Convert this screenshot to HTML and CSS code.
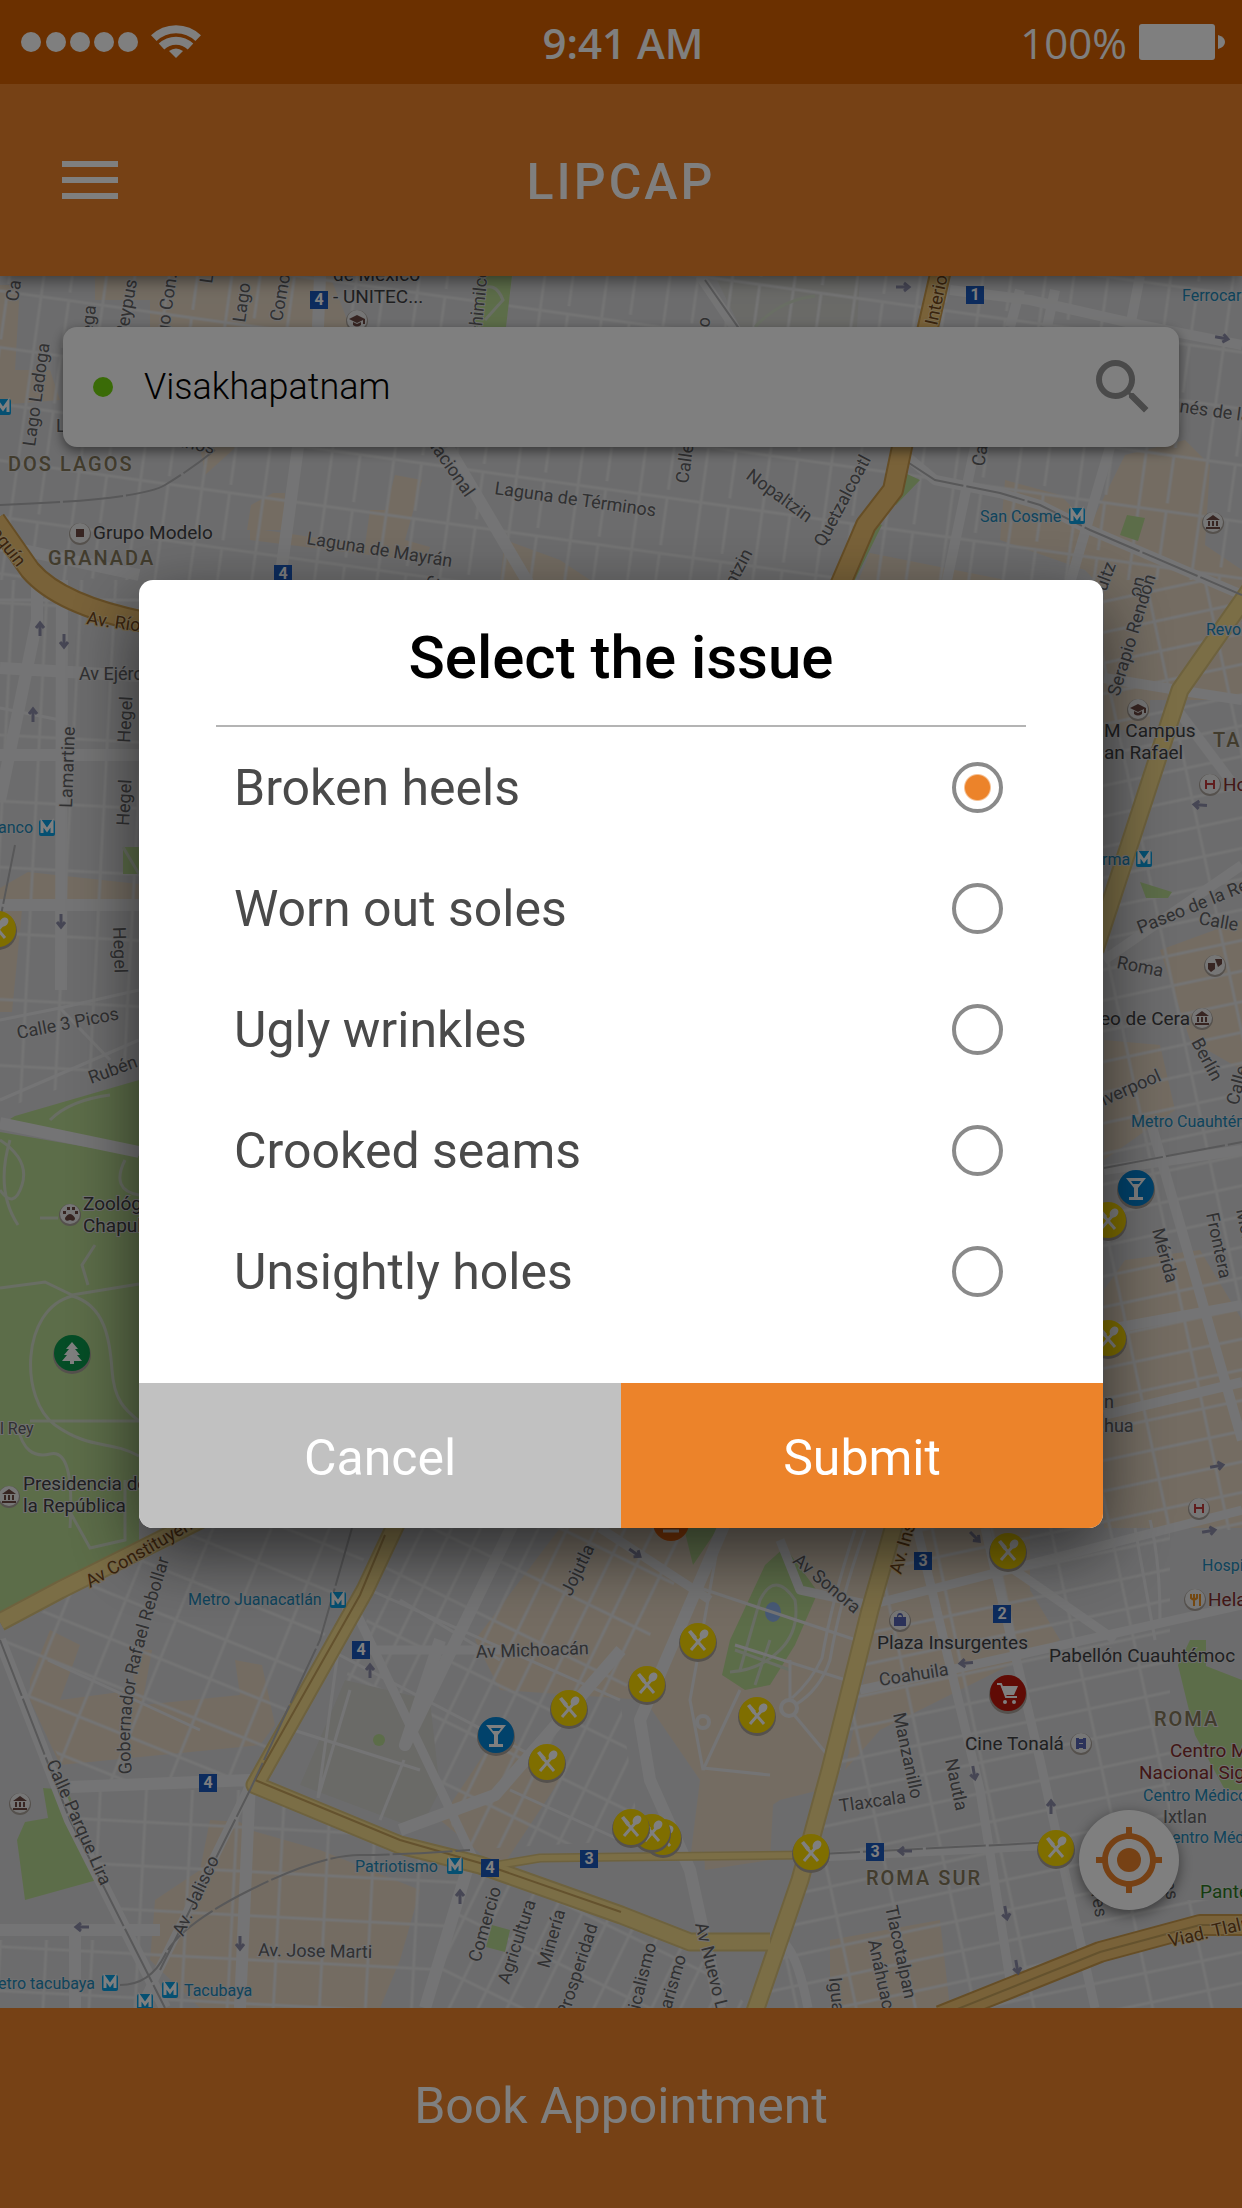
FILE: index.html
```html
<!DOCTYPE html>
<html lang="en">
<head>
<meta charset="utf-8">
<meta name="viewport" content="width=device-width, initial-scale=1">
<title>LIPCAP</title>
<link rel="stylesheet" href="styles.css">
</head>
<body class="screen">
<div class="status">
  <div class="status__side">
    <svg class="status__signal" viewBox="0 0 118 20" aria-hidden="true"><circle cx="10" cy="10" r="10"/><circle cx="35" cy="10" r="10"/><circle cx="59" cy="10" r="10"/><circle cx="83" cy="10" r="10"/><circle cx="107" cy="10" r="10"/></svg>
    <svg class="status__wifi" viewBox="0 0 50 34" aria-hidden="true"><path d="M25 33l-7-7q7-5 14 0z"/><path d="M10.500 21.500a21 21 0 0 1 29 0M2.800 13.200a32 32 0 0 1 44.400 0" fill="none" stroke="#fff" stroke-width="8"/></svg>
  </div>
  <span class="status__time">9:41 AM</span>
  <div class="status__side status__side--end">
    <span class="status__charge">100%</span>
    <svg class="status__battery" viewBox="0 0 86 36" aria-hidden="true"><rect width="76" height="36" rx="3"/><path d="M79 11q7 2 7 7t-7 7z"/></svg>
  </div>
</div>
<header class="topbar">
  <button class="topbar__menu" type="button" aria-label="Menu"><span></span><span></span><span></span></button>
  <h1 class="topbar__title">LIPCAP</h1>
</header>
<main class="place">
  <svg class="map" viewBox="0 276 1242 1732" preserveAspectRatio="xMidYMid slice" role="img" aria-label="Street map">
    <defs>
      <pattern id="g-north" width="62" height="56" patternUnits="userSpaceOnUse" patternTransform="rotate(8)"><path class="lane" d="M0 8H62M20 0V56M48 8V56"/></pattern>
      <pattern id="g-west" width="34" height="66" patternUnits="userSpaceOnUse" patternTransform="rotate(3)"><path class="lane" d="M0 8H34M10 0V66"/></pattern>
      <pattern id="g-juarez" width="54" height="42" patternUnits="userSpaceOnUse" patternTransform="rotate(22)"><path class="lane" d="M0 8H54M14 0V42"/></pattern>
      <pattern id="g-roma" width="58" height="30" patternUnits="userSpaceOnUse" patternTransform="rotate(-12)"><path class="lane" d="M0 8H58M14 0V30"/></pattern>
      <pattern id="g-condesa" width="26" height="56" patternUnits="userSpaceOnUse" patternTransform="rotate(26)"><path class="lane" d="M0 8H26M10 0V56"/></pattern>
      <pattern id="g-south" width="46" height="44" patternUnits="userSpaceOnUse" patternTransform="rotate(3)"><path class="lane" d="M0 8H46M10 0V44"/></pattern>
      <symbol id="food" viewBox="-20 -20 40 40" overflow="visible"><circle class="pin-shadow" cy="2" r="19"/><circle fill="#ffdc00" r="18"/><path d="M-7 9L6-6M7 9L-5-5" stroke="#fff" stroke-width="3" fill="none"/><ellipse cx="6" cy="-7" rx="4" ry="5" fill="#fff" transform="rotate(40 6 -7)"/><path d="M-10-9l3-2 6 7-3 3z" fill="#fff"/></symbol>
      <symbol id="bar" viewBox="-20 -20 40 40" overflow="visible"><circle class="pin-shadow" cy="2" r="19"/><circle fill="#0284d6" r="18"/><path d="M-10-10H10L2 0V9H7V12H-7V9H-2V0zM-5-7l2 3h6l2-3z" fill="#fff" fill-rule="evenodd"/></symbol>
      <symbol id="metro" viewBox="-9 -9 18 18" overflow="visible"><rect x="-8" y="-8" width="16" height="16" rx="2" fill="#0aa0e4"/><path d="M-5 5V-5L0 2L5-5V5" fill="none" stroke="#fff" stroke-width="3"/></symbol>
      <symbol id="dot" viewBox="-12 -12 24 24" overflow="visible"><circle class="pin-shadow" cy="1" r="11"/><circle class="pin-face" r="10"/></symbol>
      <symbol id="museum" viewBox="-12 -12 24 24" overflow="visible"><circle class="pin-shadow" cy="1" r="11"/><circle class="pin-face" r="10"/><path d="M-7-2L0-7L7-2zM-5-1V4H-3V-1M-1-1V4H1V-1M3-1V4H5V-1M-7 5H7V7H-7z" fill="#6e4a44"/></symbol>
      <symbol id="school" viewBox="-12 -12 24 24" overflow="visible"><circle class="pin-shadow" cy="1" r="11"/><circle class="pin-face" r="10"/><path d="M-8-1L0-5L8-1V4H6V0L0 3zM-4 2V5Q0 8 4 5V2L0 4z" fill="#6e4a44"/></symbol>
      <symbol id="arrow" viewBox="-8 -8 16 16" overflow="visible"><path d="M0 7V-6M-4-1L0-6L4-1" fill="none" stroke="#8c8ca8" stroke-width="3"/></symbol>
    </defs>
    <rect class="land" y="276" width="1242" height="1732"/>
    <g class="block">
      <path d="M0 285H20L15 370H50L60 400L0 405zM95 276H330L350 327H150V300H95zM200 447H236L205 475zM273 493H285L283 530H247L251 505zM395 475L422 480L405 540L430 547L425 562L250 540V528L365 545L370 510H385zM505 540L560 560L590 580H500z"/>
      <path d="M1125 455L1185 440L1210 465L1205 545L1242 570V700H1104V590L1085 570L1000 540L1005 480L1060 495L1090 525zM870 553L1030 585V600H850z"/>
      <path d="M0 888L28 872L139 884V910H22L12 1012H0zM1104 640H1150V730H1104zM1160 950L1242 920V1070L1190 1040zM1104 1040L1160 1045L1175 1110L1104 1160zM1125 1260L1200 1250L1242 1320V1528H1104V1290z"/>
      <path d="M50 1630L80 1645L60 1700L135 1690L130 1650H152L142 1705L240 1695L235 1660L262 1665L275 1725L260 1745L60 1765L30 1700V1680zM210 1820L240 1822L250 1830L320 1850L420 1890L400 1960L380 2008H200L150 1960L155 1900L200 1870zM560 1528H890L850 1690L820 1790L780 1800L690 1860L700 1780L645 1700L500 1690L475 1640zM440 1820L500 1730L560 1780L500 1870z"/>
      <path d="M890 1528H1030V1590L1060 1640L940 1700L880 1730L845 1770L880 1600zM700 1780L775 1770L770 1860L705 1870zM830 1940L940 1920L950 2008H830z"/>
    </g>
    <path class="plaza" d="M715 276H860L857 327H740zM345 1680L430 1700L440 1790L420 1830L300 1785z"/>
    <g>
      <path fill="url(#g-north)" d="M0 276H1242V580H0z"/>
      <path fill="url(#g-west)" d="M0 580H139V1060L0 1110z"/>
      <path fill="url(#g-roma)" d="M1100 580H1242V1530H1100zM890 1520H1170V1900L1242 1900V2008H760L870 1600z"/>
      <path fill="url(#g-juarez)" d="M60 1600L200 1528H380L250 1780L70 1780L0 1640z"/>
      <path fill="url(#g-condesa)" d="M400 1528H700L620 1700L640 1840L460 1850L440 1790L430 1700L345 1680zM470 1870L690 1950L750 2008H430z"/>
      <path fill="url(#g-south)" d="M60 1790H250L460 1870L430 2008H0V1940H130z"/>
    </g>
    <g class="park">
      <path d="M478 276H512L506 327H474zM905 473L920 480L896 505L890 498zM875 522L882 525L855 580H850zM1127 515L1145 518L1138 541L1120 535zM123 847H139V874H123z"/>
      <path d="M15 1116L139 1080V1151L0 1125zM0 1132L139 1156V1400V1545L0 1615zM1140 882L1172 892L1168 898H1146z"/>
      <path d="M684 1528H718L693 1565zM785 1547L818 1592L795 1645L770 1685L745 1690L722 1675L730 1640L765 1565zM1190 1640H1206V1666L1242 1680V1790H1225L1195 1735L1178 1665zM43 1788L68 1790L97 1880L25 1900L17 1840L25 1822L48 1818zM492 1925L510 1930L505 1952L486 1947z"/>
      <circle cx="379" cy="1740" r="6"/>
    </g>
    <ellipse cx="773" cy="1612" rx="8" ry="10" fill="#90b4ec"/>
    <g class="trail">
      <path d="M0 1288L45 1282L72 1295L139 1284M72 1296C20 1310 20 1400 55 1425S110 1440 139 1456M72 1296C105 1305 110 1340 112 1370S125 1410 139 1421H30M18 1428Q25 1460 50 1454T70 1528M0 1140Q30 1160 22 1185T0 1190M10 1140Q-5 1190 18 1225M125 1160Q110 1190 139 1195M95 1245L82 1265L88 1285M40 1218H58M50 1120Q70 1100 110 1095M65 1503L90 1548L125 1540V1480"/>
      <path d="M740 1670L760 1600Q775 1570 795 1600Q800 1630 780 1650T730 1672M735 1650L790 1670M770 1640L755 1685M123 847L139 874M480 290Q495 280 503 300L485 320"/>
      <path d="M755 327Q780 300 815 296"/>
    </g>
    <g class="road">
      <path stroke-width="12" d="M0 668L139 676M0 1123L139 1152M37 580V620L0 800M62 580L61 990M0 755H139M0 905H139M298 447L280 580M448 447L550 620M320 276L318 327M0 545L139 575"/>
      <path stroke-width="10" d="M950 290L1030 300L1140 325L1242 345M1020 290L1010 327M1055 290L1047 327M1140 276L1130 327M905 455L935 480L1000 493L1040 505L1090 530L1242 595M975 447L945 590M1110 447L1068 590M700 276L750 350M1104 678L1190 692L1242 700M1170 700L1230 780M1104 960L1242 865M1104 1170L1242 1150M1104 1330L1242 1305M1104 1415L1242 1382M1150 1120L1242 1440"/>
      <path stroke-width="12" d="M0 1640L70 1820L165 2008M70 1787L250 1780L240 2008M515 1520L405 1745L440 1640M621 1650L495 1795L400 1830M470 1860L425 2008M0 1930H160M75 1930V2008M735 1500L640 1720L650 1780L690 1870L720 2008"/>
      <path stroke-width="9" d="M355 1610L455 1820L475 1862M250 1785L140 2008M600 1528L710 1600M370 1650L500 1650M780 1540L800 1590L870 1605L1242 1510M915 1520L980 1790L1010 1980M985 1528L1040 1760L1095 2008M860 1690L1242 1605M800 1858L1056 1845M775 1938Q795 1940 808 2008M1000 1560L1115 1640"/>
      <path stroke-width="3" d="M721 1528L690 1700L703 1770M703 1768L770 1775M790 1710L840 1770M740 1690L703 1770M790 1660L790 1700M865 1530Q840 1600 830 1660Q820 1690 795 1705M855 1530Q832 1600 822 1658Q812 1680 792 1698M700 1588L862 1642M735 1645L852 1682M0 600H139M48 1660L200 1730M370 1590L620 1700M330 1650L560 1770M400 1600L500 1660M1104 528M1150 1520Q1160 1560 1160 1620M1135 1528L1155 1640M510 1790L620 1840M0 708L60 720M0 1020L60 1008L139 990M0 1100L139 1040M60 1008L110 1060M345 1600L318 1798M350 1690L318 1798M404 1760L380 1820M290 1729L420 1770"/>
    </g>
    <circle class="ring" cx="789" cy="1708" r="8"/>
    <circle class="ring" cx="703" cy="1722" r="6"/>
    <g class="avenue avenue--casing">
      <path stroke-width="19" d="M1250 590L1180 690L1095 950M0 1622L60 1590L210 1515M398 1520L365 1590L255 1785L400 1845L480 1865L621 1915L690 1942H770M897 1515L870 1610L830 1770L800 1880L752 2020"/>
      <path stroke-width="9" d="M480 1868L540 1858L621 1857L805 1855"/>
    </g>
    <g class="avenue">
      <path stroke-width="15" d="M1250 590L1180 690L1095 950M0 1622L60 1590L210 1515M398 1520L365 1590L255 1785L400 1845L480 1865L621 1915L690 1942H770M897 1515L870 1610L830 1770L800 1880L752 2020"/>
      <path stroke-width="6" d="M480 1868L540 1858L621 1857L805 1855"/>
    </g>
    <path class="median" d="M385 1535L360 1595L255 1780L400 1840L480 1863L621 1912"/>
    <path class="rail" d="M909 463L935 480L1000 493L1040 505L1090 530L1242 595M705 280L740 330M15 845L0 920M352 1528L320 1640L250 1790L160 1970M0 1640L70 1820L165 2008M120 1985Q150 1985 165 1955T250 1890T360 1855T470 1850M1104 1168L1242 1142M800 1855L1056 1842M0 505Q140 500 165 485T215 450"/>
    <g class="highway highway--casing"><path d="M941 270L925 340L902 447L893 490L866 525L838 590M-5 520L30 570Q60 605 145 622M940 2016L1100 1952L1200 1925H1250"/></g>
    <g class="highway"><path d="M941 270L925 340L902 447L893 490L866 525L838 590M-5 520L30 570Q60 605 145 622M940 2016L1100 1952L1200 1925H1250"/></g>
    <path class="median" d="M940 2016L1100 1952L1200 1925H1250"/>

    <g class="street">
      <text transform="translate(18 302) rotate(-82)">Ca</text>
      <text transform="translate(92 345) rotate(-84)">nega</text>
      <text transform="translate(127 338) rotate(-80)">Peypus</text>
      <text transform="translate(167 345) rotate(-82)">ago Con.</text>
      <text transform="translate(212 284) rotate(-82)">Lago</text>
      <text transform="translate(245 323) rotate(-82)">Lago</text>
      <text transform="translate(282 322) rotate(-80)">Como</text>
      <text transform="translate(480 346) rotate(-84)">ochimilco</text>
      <text transform="translate(35 447) rotate(-82)">Lago Ladoga</text>
      <text transform="translate(56 432)">L</text>
      <text transform="translate(176 446) rotate(12)">linos</text>
      <text transform="translate(425 440) rotate(55)">Nacional</text>
      <text transform="translate(494 494) rotate(8)">Laguna de Términos</text>
      <text transform="translate(306 544) rotate(9)">Laguna de Mayrán</text>
      <text transform="translate(436 590) rotate(-60)">C</text>
      <text transform="translate(730 596) rotate(-62)">entzin</text>
      <text transform="translate(745 478) rotate(36)">Nopaltzin</text>
      <text transform="translate(824 548) rotate(-62)">Quetzalcoatl</text>
      <text transform="translate(688 484) rotate(-82)">Calle</text>
      <text transform="translate(709 328) rotate(-82)">o</text>
      <text transform="translate(1179 412) rotate(8)">nés de la</text>
      <text transform="translate(984 467) rotate(-80)">Ca</text>
      <text transform="translate(1106 592) rotate(-70)">ultz</text>
      <text transform="translate(1140 598) rotate(-75)">on</text>
      <text transform="translate(79 680)">Av Ejército</text>
      <text transform="translate(130 743) rotate(-87)">Hegel</text>
      <text transform="translate(129 826) rotate(-87)">Hegel</text>
      <text transform="translate(113 927) rotate(88)">Hegel</text>
      <text transform="translate(72 808) rotate(-88)">Lamartine</text>
      <text transform="translate(18 1039) rotate(-11)">Calle 3 Picos</text>
      <text transform="translate(91 1084) rotate(-20)">Rubén</text>
      <text transform="translate(0 1434)" class="small">l Rey</text>
      <text transform="translate(1119 697) rotate(-73)">Serapio Rendon</text>
      <text transform="translate(1140 934) rotate(-22)">Paseo de la Reforma</text>
      <text transform="translate(1198 924) rotate(10)">Calle</text>
      <text transform="translate(1116 968) rotate(11)">Roma</text>
      <text transform="translate(1191 1042) rotate(62)">Berlín</text>
      <text transform="translate(1104 1106) rotate(-24)">iverpool</text>
      <text transform="translate(1238 1106) rotate(-75)">Calle</text>
      <text transform="translate(1152 1230) rotate(75)">Mérida</text>
      <text transform="translate(1206 1214) rotate(78)">Frontera</text>
      <text transform="translate(1236 1210) rotate(78)">Mor</text>
      <text transform="translate(1104 1408)">n</text>
      <text transform="translate(1104 1432)">hua</text>
      <text transform="translate(476 1658) rotate(-2)">Av Michoacán</text>
      <text transform="translate(571 1597) rotate(-64)">Jojutla</text>
      <text transform="translate(46 1763) rotate(66)">Calle Parque Lira</text>
      <text transform="translate(183 1937) rotate(-65)">Av. Jalisco</text>
      <text transform="translate(480 1963) rotate(-74)">Comercio</text>
      <text transform="translate(509 1985) rotate(-72)">Agricultura</text>
      <text transform="translate(549 1969) rotate(-74)">Minería</text>
      <text transform="translate(568 2018) rotate(-72)">Prosperidad</text>
      <text transform="translate(258 1956) rotate(1)">Av. Jose Marti</text>
      <text transform="translate(880 1686) rotate(-9)">Coahuila</text>
      <text transform="translate(840 1812) rotate(-8)">Tlaxcala</text>
      <text transform="translate(893 1714) rotate(78)">Manzanillo</text>
      <text transform="translate(945 1760) rotate(78)">Nautla</text>
      <text transform="translate(885 1907) rotate(78)">Tlacotalpan</text>
      <text transform="translate(868 1941) rotate(78)">Anáhuac</text>
      <text transform="translate(829 1978) rotate(84)">Igua</text>
      <text transform="translate(695 1924) rotate(76)">Av Nuevo León</text>
      <text transform="translate(640 2010) rotate(-76)">icalismo</text>
      <text transform="translate(671 2010) rotate(-74)">arismo</text>
      <text transform="translate(792 1562) rotate(40)">Av Sonora</text>
      <text transform="translate(1163 1823)">Ixtlan</text>
      <text transform="translate(1086 1864) rotate(80)">Pilares</text>
      <text transform="translate(1160 1862) rotate(80)">lares</text>
      <path id="rebollar" d="M132 1774C124 1700 142 1650 175 1540" fill="none" stroke="none"/>
      <text><textPath href="#rebollar">Gobernador Rafael Rebollar</textPath></text>
    </g>
    <g class="street artery">
      <text transform="translate(-10 533) rotate(52)">aquín</text>
      <text transform="translate(86 624) rotate(8)">Av. Río</text>
      <text transform="translate(937 326) rotate(-78)">Interior</text>
      <text transform="translate(90 1588) rotate(-30)">Av Constituyentes</text>
      <text transform="translate(901 1575) rotate(-74)">Av. Insur</text>
      <text transform="translate(1170 1947) rotate(-13)">Viad. Tlalpan</text>
    </g>
    <g class="poi">
      <text x="333" y="281">de México</text>
      <text x="333" y="303">- UNITEC...</text>
      <text x="93" y="539">Grupo Modelo</text>
      <text x="83" y="1210">Zoológico</text>
      <text x="83" y="1232">Chapultepec</text>
      <text x="23" y="1490">Presidencia de</text>
      <text x="23" y="1512">la República</text>
      <text x="1104" y="737">M Campus</text>
      <text x="1104" y="759">an Rafael</text>
      <text x="1100" y="1025">eo de Cera</text>
      <text x="877" y="1649">Plaza Insurgentes</text>
      <text x="1049" y="1662">Pabellón Cuauhtémoc</text>
      <text x="965" y="1750">Cine Tonalá</text>
    </g>
    <g class="poi medical">
      <text x="1223" y="791">Hospital</text>
      <text x="1208" y="1606">Heladería</text>
      <text x="1170" y="1757">Centro Médico</text>
      <text x="1139" y="1779">Nacional Siglo</text>
    </g>
    <text class="poi garden" x="1200" y="1898">Panteón</text>
    <g class="transit">
      <text x="1182" y="301">Ferrocarril</text>
      <text x="980" y="522">San Cosme</text>
      <text x="-2" y="833">anco</text>
      <text x="1206" y="635">Revolución</text>
      <text x="1102" y="865">rma</text>
      <text x="1131" y="1127">Metro Cuauhtémoc</text>
      <text x="188" y="1605">Metro Juanacatlán</text>
      <text x="355" y="1872">Patriotismo</text>
      <text x="-2" y="1989">etro tacubaya</text>
      <text x="184" y="1996">Tacubaya</text>
      <text x="1202" y="1571">Hospital</text>
      <text x="1143" y="1801">Centro Médico</text>
      <text x="1172" y="1843">entro Médico</text>
    </g>
    <g class="district">
      <text x="8" y="471">DOS LAGOS</text>
      <text x="48" y="565">GRANADA</text>
      <text x="1213" y="747">TABACALERA</text>
      <text x="1154" y="1726">ROMA</text>
      <text x="866" y="1885">ROMA SUR</text>
    </g>
    <g>
      <use href="#metro" x="-6" y="398" width="18" height="18"/>
      <use href="#metro" x="1068" y="507" width="18" height="18"/>
      <use href="#metro" x="38" y="819" width="18" height="18"/>
      <use href="#metro" x="1135" y="850" width="18" height="18"/>
      <use href="#metro" x="329" y="1591" width="18" height="18"/>
      <use href="#metro" x="446" y="1857" width="18" height="18"/>
      <use href="#metro" x="101" y="1974" width="18" height="18"/>
      <use href="#metro" x="161" y="1981" width="18" height="18"/>
      <use href="#metro" x="136" y="1993" width="18" height="18"/>
    </g>
    <g class="shield">
      <path d="M310 291h18v18h-18zM274 565h18v18h-18zM966 286h18v18h-18zM352 1641h18v18h-18zM199 1774h18v18h-18zM481 1859h18v18h-18zM580 1850h18v18h-18zM914 1552h18v18h-18zM993 1605h18v18h-18zM866 1843h18v18h-18z"/>
      <text x="319" y="305">4</text><text x="283" y="579">4</text><text x="975" y="300">1</text><text x="361" y="1655">4</text><text x="208" y="1788">4</text><text x="490" y="1873">4</text><text x="589" y="1864">3</text><text x="923" y="1566">3</text><text x="1002" y="1619">2</text><text x="875" y="1857">3</text>
    </g>
    <g>
      <use href="#school" x="345" y="308" width="24" height="24"/>
      <use href="#school" x="1126" y="697" width="24" height="24"/>
      <use href="#museum" x="1201" y="510" width="24" height="24"/>
      <use href="#museum" x="1190" y="1006" width="24" height="24"/>
      <use href="#museum" x="8" y="1791" width="24" height="24"/>
      <use href="#museum" x="-3" y="1484" width="24" height="24"/>
      <use href="#dot" x="68" y="521" width="24" height="24"/><path fill="#6e4a44" d="M76 529h8v8h-8z"/>
      <use href="#dot" x="58" y="1202" width="24" height="24"/><path fill="#6e4a44" d="M65 1218q5-8 10 0q0 4-5 2q-5 2-5-2zM63 1211h3v3h-3zM67 1207h3v3h-3zM72 1207h3v3h-3zM75 1211h3v3h-3z"/>
      <use href="#dot" x="1203" y="953" width="24" height="24"/><path fill="#6e4a44" d="M1208 963h7v6l-4 3-3-3zM1215 959h7v5l-4 3z"/>
      <use href="#dot" x="888" y="1608" width="24" height="24"/><path fill="#5664b4" fill-rule="evenodd" d="M894 1617h3q0-4 3-4t3 4h3v9h-12zM898 1617h4q0-2-2-2t-2 2z"/>
      <use href="#dot" x="1069" y="1731" width="24" height="24"/><path fill="#5664b4" d="M1076 1738h3v11h-3zM1083 1738h3v11h-3zM1079 1739h4v4h-4zM1079 1744h4v4h-4z"/>
      <use href="#dot" x="1198" y="772" width="24" height="24"/><use href="#dot" x="1187" y="1496" width="24" height="24"/>
      <path d="M1206 780v9M1214 780v9M1206 784h8M1195 1504v9M1203 1504v9M1195 1508h8" stroke="#c03a3a" stroke-width="2"/>
      <use href="#dot" x="1183" y="1587" width="24" height="24"/><path fill="none" stroke="#e89020" stroke-width="2" d="M1191 1594v4q3 3 6 0v-4M1194 1594v12M1200 1594v12"/>
    </g>
    <g>
      <use href="#arrow" x="32" y="621" width="16" height="16"/>
      <use href="#arrow" x="25" y="707" width="16" height="16"/>
      <use href="#arrow" x="362" y="1663" width="16" height="16"/>
      <use href="#arrow" x="452" y="1889" width="16" height="16"/>
      <use href="#arrow" x="1043" y="1799" width="16" height="16"/>
      <g transform="rotate(180 64 641)"><use href="#arrow" x="56" y="633" width="16" height="16"/></g>
      <g transform="rotate(180 61 921)"><use href="#arrow" x="53" y="913" width="16" height="16"/></g>
      <g transform="rotate(180 240 1943)"><use href="#arrow" x="232" y="1935" width="16" height="16"/></g>
      <g transform="rotate(170 974 1773)"><use href="#arrow" x="966" y="1765" width="16" height="16"/></g>
      <g transform="rotate(170 1006 1913)"><use href="#arrow" x="998" y="1905" width="16" height="16"/></g>
      <g transform="rotate(170 1017 1967)"><use href="#arrow" x="1009" y="1959" width="16" height="16"/></g>
      <g transform="rotate(90 903 287)"><use href="#arrow" x="895" y="279" width="16" height="16"/></g>
      <g transform="rotate(100 1222 338)"><use href="#arrow" x="1214" y="330" width="16" height="16"/></g>
      <g transform="rotate(80 1209 1531)"><use href="#arrow" x="1201" y="1523" width="16" height="16"/></g>
      <g transform="rotate(80 1217 1466)"><use href="#arrow" x="1209" y="1458" width="16" height="16"/></g>
      <g transform="rotate(-85 1200 805)"><use href="#arrow" x="1192" y="797" width="16" height="16"/></g>
      <g transform="rotate(-90 82 1927)"><use href="#arrow" x="74" y="1919" width="16" height="16"/></g>
      <g transform="rotate(-95 966 1663)"><use href="#arrow" x="958" y="1655" width="16" height="16"/></g>
      <g transform="rotate(-90 905 1851)"><use href="#arrow" x="897" y="1843" width="16" height="16"/></g>
      <g transform="rotate(125 635 1553)"><use href="#arrow" x="627" y="1545" width="16" height="16"/></g>
      <g transform="rotate(135 975 1537)"><use href="#arrow" x="967" y="1529" width="16" height="16"/></g>
    </g>
    <g>
      <use href="#food" x="-22" y="909" width="40" height="40"/>
      <use href="#food" x="1088" y="1200" width="40" height="40"/>
      <use href="#food" x="1088" y="1318" width="40" height="40"/>
      <use href="#food" x="549" y="1688" width="40" height="40"/>
      <use href="#food" x="527" y="1742" width="40" height="40"/>
      <use href="#food" x="643" y="1817" width="40" height="40"/>
      <use href="#food" x="632" y="1812" width="40" height="40"/>
      <use href="#food" x="611" y="1807" width="40" height="40"/>
      <use href="#food" x="678" y="1621" width="40" height="40"/>
      <use href="#food" x="627" y="1664" width="40" height="40"/>
      <use href="#food" x="737" y="1695" width="40" height="40"/>
      <use href="#food" x="791" y="1832" width="40" height="40"/>
      <use href="#food" x="1036" y="1828" width="40" height="40"/>
      <use href="#food" x="988" y="1531" width="40" height="40"/>
      <use href="#bar" x="1116" y="1168" width="40" height="40"/>
      <use href="#bar" x="476" y="1715" width="40" height="40"/>
      <circle class="pin-shadow" cx="72" cy="1355" r="19"/><circle cx="72" cy="1353" r="18" fill="#0a9a4c"/><path fill="#fff" d="M72 1342l6 7h-3l5 6h-3l5 6h-8v3h-4v-3h-8l5-6h-3l5-6h-3z"/>
      <circle cx="671" cy="1523" r="18" fill="#f26a10"/><path d="M663 1531h16" stroke="#fff" stroke-width="3"/>
      <circle class="pin-shadow" cx="1008" cy="1695" r="19"/><circle cx="1008" cy="1693" r="18" fill="#c0160a"/><path fill="none" stroke="#fff" stroke-width="2" d="M997 1684h4l5 13h11"/><path fill="#fff" d="M1001 1686h17l-4 9h-9z"/><circle cx="1005" cy="1702" r="2" fill="#fff"/><circle cx="1014" cy="1702" r="2" fill="#fff"/>
    </g>
  </svg>
  <form class="search">
    <span class="search__dot"></span>
    <input class="search__field" type="text" value="Visakhapatnam" aria-label="Location">
    <button class="search__go" type="button" aria-label="Search"><svg viewBox="0 0 24 24" aria-hidden="true"><path d="M15.500 14h-.79l-.28-.27A6.471 6.471 0 0 0 16 9.500 6.500 6.500 0 1 0 9.500 16c1.610 0 3.090-.59 4.230-1.570l.27.28v.79l5 4.990L20.490 19l-4.990-5zm-6 0C7.010 14 5 11.990 5 9.500S7.010 5 9.500 5 14 7.010 14 9.500 11.990 14 9.500 14z"/></svg></button>
  </form>
  <button class="locate" type="button" aria-label="My location"><svg viewBox="0 0 24 24" aria-hidden="true"><circle cx="12" cy="12" r="4"/><path d="M20.940 11A8.994 8.994 0 0 0 13 3.060V1h-2v2.060A8.994 8.994 0 0 0 3.060 11H1v2h2.060A8.994 8.994 0 0 0 11 20.940V23h2v-2.060A8.994 8.994 0 0 0 20.940 13H23v-2h-2.060zM12 19c-3.870 0-7-3.130-7-7s3.130-7 7-7 7 3.130 7 7-3.130 7-7 7z"/></svg></button>
</main>
<button class="book" type="button">Book Appointment</button>

<div class="overlay">
  <form class="dialog" role="dialog" aria-modal="true" aria-labelledby="dialog-title">
    <h2 class="dialog__title" id="dialog-title">Select the issue</h2>
    <div class="issues">
      <label class="issue"><span>Broken heels</span><input class="issue__radio" type="radio" name="issue" checked></label>
      <label class="issue"><span>Worn out soles</span><input class="issue__radio" type="radio" name="issue"></label>
      <label class="issue"><span>Ugly wrinkles</span><input class="issue__radio" type="radio" name="issue"></label>
      <label class="issue"><span>Crooked seams</span><input class="issue__radio" type="radio" name="issue"></label>
      <label class="issue"><span>Unsightly holes</span><input class="issue__radio" type="radio" name="issue"></label>
    </div>
    <div class="dialog__actions">
      <button class="action action--cancel" type="button">Cancel</button>
      <button class="action action--submit" type="button">Submit</button>
    </div>
  </form>
</div>
</body>
</html>
```
FILE: styles.css
```css
* { box-sizing: border-box; }

.screen {
  display: flex;
  flex-direction: column;
  min-height: 100vh;
  margin: 0;
  font-family: Roboto, "Liberation Sans", sans-serif;
}

button {
  border: 0;
  padding: 0;
  font: inherit;
  cursor: pointer;
}

/* Status bar */
.status {
  position: relative;
  z-index: 2;
  display: grid;
  grid-template-columns: 1fr auto 1fr;
  align-items: center;
  height: 84px;
  padding: 0 17px 0 21px;
  background: #d66000;
  color: #fff;
  font-family: "Open Sans", "Noto Sans", sans-serif;
  font-size: 42px;
}
.status svg { fill: #fff; }
.status__side { display: flex; align-items: center; gap: 12px; }
.status__side--end { justify-content: flex-end; }
.status__signal { width: 118px; height: 20px; }
.status__wifi { width: 50px; height: 34px; }
.status__time { font-weight: 600; }
.status__charge { font-weight: 400; }
.status__battery { width: 86px; height: 36px; }

/* App bar */
.topbar {
  position: relative;
  z-index: 1;
  display: grid;
  grid-template-columns: 1fr auto 1fr;
  align-items: center;
  height: 192px;
  padding: 0 62px;
  background: #ec832a;
  box-shadow: 0 4px 16px rgba(0, 0, 0, .5);
}
.topbar__menu {
  display: grid;
  gap: 10px;
  width: 56px;
  background: none;
}
.topbar__menu span { height: 6px; background: #fff; }
.topbar__title {
  margin: 0;
  padding-top: 3px;
  color: #fff;
  font-size: 50px;
  font-weight: 500;
  letter-spacing: 3px;
}

/* Map area */
.place {
  position: relative;
  display: flex;
  flex: 1;
  flex-direction: column;
  justify-content: space-between;
  min-height: 600px;
  padding: 51px 63px 98px;
  overflow: hidden;
}
.map {
  position: absolute;
  inset: 0;
  width: 100%;
  height: 100%;
}
.land { fill: #d9d9db; }
.block { fill: #e8d9c5; }
.plaza { fill: #d4d4cf; }
.park { fill: #b9da92; }
.lane { fill: none; stroke: #e8e8e8; stroke-width: 3; }
.road { fill: none; stroke: #e9e9ea; stroke-linejoin: round; }
.trail { fill: none; stroke: #d2dcc8; stroke-width: 3; }
.ring { fill: #e8d9c5; stroke: #e9e9ea; stroke-width: 4; }
.rail { fill: none; stroke: #b0b0b2; stroke-width: 2; stroke-dasharray: 60 3; }
.avenue { fill: none; stroke: #f6dc8c; stroke-linejoin: round; }
.avenue--casing { stroke: #dcc47c; }
.highway { fill: none; stroke: #f2c472; stroke-width: 18; stroke-linejoin: round; }
.highway--casing { stroke: #cc9c4c; stroke-width: 22; }
.median { fill: none; stroke: #c8a45c; stroke-width: 2; }
.pin-shadow { fill: #aaa29a; }
.pin-face { fill: #ececec; }
.map text { font-size: 18px; }
.street { fill: #626264; paint-order: stroke; stroke: #e0e0e2; stroke-width: 2px; }
.map .small { font-size: 16px; }
.artery { fill: #74481a; stroke: #f0d49c; }
.map .poi text, .map .garden { font-size: 19px; }
.poi { fill: #404042; paint-order: stroke; stroke: #e0e0e2; stroke-width: 2px; }
.medical { fill: #842c2c; }
.garden { fill: #2c7820; }
.map .transit text { font-size: 16px; }
.transit { fill: #2088b8; paint-order: stroke; stroke: #e0e0e2; stroke-width: 2px; }
.map .district text { font-size: 20px; font-weight: 500; letter-spacing: 2px; }
.district { fill: #84785a; paint-order: stroke; stroke: #e0e0e2; stroke-width: 2px; }
.shield { fill: #1a58bc; }
.map .shield text { fill: #fff; font-size: 16px; font-weight: 700; text-anchor: middle; }

.search {
  position: relative;
  display: flex;
  align-items: center;
  height: 120px;
  padding: 0 20px 0 30px;
  border-radius: 14px;
  background: #fff;
  box-shadow: 0 4px 12px rgba(0, 0, 0, .5);
}
.search__dot {
  width: 20px;
  height: 20px;
  margin-right: 31px;
  border-radius: 50%;
  background: #74d60f;
}
.search__field {
  flex: 1;
  min-width: 0;
  border: 0;
  padding: 0;
  outline: 0;
  background: none;
  color: #000;
  font: 300 36px Roboto, "Liberation Sans", sans-serif;
}
.search__go { background: none; }
.search__go svg { display: block; width: 72px; height: 72px; fill: #949494; }

.locate {
  position: relative;
  display: grid;
  place-items: center;
  align-self: flex-end;
  width: 100px;
  height: 100px;
  border-radius: 50%;
  background: #fff;
  box-shadow: 0 4px 14px rgba(0, 0, 0, .5);
}
.locate svg { width: 72px; height: 72px; fill: #ec832a; }

.book {
  height: 200px;
  padding-bottom: 4px;
  background: #ec832a;
  color: #fff;
  font-size: 50px;
}

/* Issue dialog */
.overlay {
  position: fixed;
  inset: 0;
  z-index: 3;
  display: flex;
  align-items: center;
  justify-content: center;
  padding: 0 0 100px;
  background: rgba(0, 0, 0, .5);
}
.dialog {
  width: 964px;
  max-width: 90%;
  overflow: hidden;
  border-radius: 14px;
  background: #fff;
  box-shadow: 0 24px 70px rgba(0, 0, 0, .6);
}
.dialog__title {
  margin: 0 77px;
  padding: 42px 0 31px;
  border-bottom: 2px solid #b4b4b4;
  font-size: 60px;
  font-weight: 500;
  line-height: 72px;
  text-align: center;
}
.issues { padding: 0 100px 51px 95px; }
.issue {
  display: flex;
  align-items: center;
  justify-content: space-between;
  height: 121px;
  color: #4a4a4a;
  font-size: 50px;
}
.issue__radio {
  width: 51px;
  height: 51px;
  margin: 0;
  border: 4px solid #8a8a8a;
  border-radius: 50%;
  appearance: none;
}
.issue__radio:checked {
  background: radial-gradient(circle, #ec832a 12px, #fff 14px);
}
.dialog__actions { display: grid; grid-template-columns: 1fr 1fr; }
.action { height: 145px; padding-top: 4px; color: #fff; font-size: 50px; }
.action--cancel { background: #c1c1c1; }
.action--submit { background: #ec832a; }
```
